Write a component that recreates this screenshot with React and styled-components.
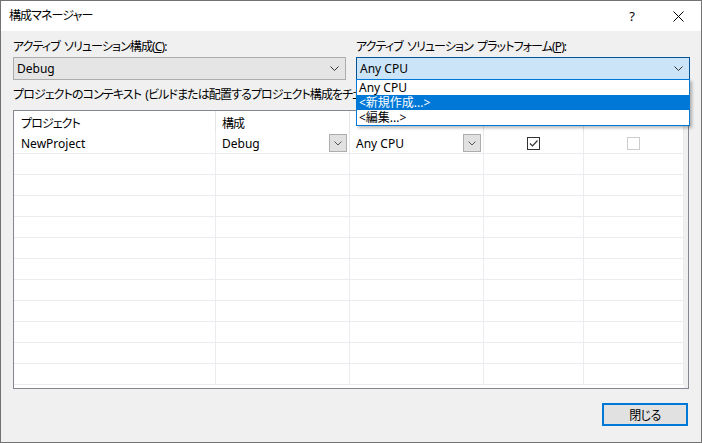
import React from "react";
import styled, { createGlobalStyle } from "styled-components";

const GlobalStyle = createGlobalStyle`
  html, body { margin: 0; padding: 0; background: #fff; }
  body {
    font-family: "Noto Sans", "Noto Sans CJK JP", sans-serif;
    font-size: 12px;
    color: #000;
    font-feature-settings: "palt";
  }
  * { box-sizing: border-box; }
`;

const Window = styled.div`
  width: 702px;
  height: 443px;
  border: 1px solid #727272;
  background: #f0f0f0;
  display: flex;
  flex-direction: column;
`;

const TitleBar = styled.div`
  height: 30px;
  background: #fff;
  display: flex;
  align-items: center;
  padding-left: 8px;
`;

const TitleText = styled.div`
  flex: 1;
  line-height: 16px;
  letter-spacing: -0.9px;
`;

const TitleButton = styled.div`
  width: 46px;
  height: 30px;
  display: flex;
  align-items: center;
  justify-content: center;
  font-size: 13px;
`;

const Body = styled.div`
  flex: 1;
  display: flex;
  flex-direction: column;
  padding: 8px 11px 0 12px;
`;

const TopGrid = styled.div`
  display: grid;
  grid-template-columns: 333px 334px;
  column-gap: 10px;
`;

const Field = styled.div`
  display: flex;
  flex-direction: column;
  gap: 2px;
`;

const Label = styled.div`
  line-height: 16px;
  letter-spacing: -0.9px;
  word-spacing: 2px;
  white-space: nowrap;
  overflow: hidden;
`;

const Combo = styled.div`
  position: relative;
  height: 23px;
  display: flex;
  align-items: center;
  justify-content: space-between;
  padding: 0 3px;
  border: 1px solid ${(p) => (p.$open ? "#005499" : "#acacac")};
  background: ${(p) => (p.$open ? "#cce4f7" : "#e5e5e5")};
`;

const Chevron = styled.svg`
  width: 9px;
  height: 5px;
  margin-right: 3px;
  flex: none;
`;

const DropList = styled.div`
  position: absolute;
  top: 100%;
  left: -1px;
  right: -1px;
  border: 1px solid #0078d7;
  background: #fff;
  box-shadow: 2px 2px 3px rgba(0, 0, 0, 0.28);
  z-index: 5;
`;

const DropItem = styled.div`
  height: 15px;
  line-height: 16px;
  padding-left: 2px;
  background: ${(p) => (p.$active ? "#0078d7" : "transparent")};
  color: ${(p) => (p.$active ? "#fff" : "#000")};
  white-space: nowrap;
`;

const ContextLabel = styled(Label)`
  margin-top: 7px;
  width: 343px;
`;

const TableFrame = styled.div`
  margin-top: 7px;
  margin-right: 1px;
  height: 279px;
  border: 1px solid #828790;
  background: #fff;
  display: flex;
`;

const Grid = styled.div`
  width: 670px;
  display: flex;
  flex-direction: column;
`;

const Strip = styled.div`
  flex: 1;
  background: #f0f0f0;
`;

const Row = styled.div`
  display: grid;
  grid-template-columns: 202px 134px 134px 100px 100px;
  height: ${(p) => (p.$header ? "22px" : "21px")};
  border-bottom: ${(p) => (p.$header ? "none" : "1px solid #ececf0")};
`;

const Cell = styled.div`
  display: flex;
  align-items: center;
  justify-content: ${(p) => (p.$center ? "center" : "space-between")};
  padding-left: ${(p) => (p.$center ? "0" : p.$first ? "7px" : "6px")};
  padding-top: 1px;
  border-right: 1px solid ${(p) => (p.$header ? "#e5e5e5" : "#ececf0")};
  letter-spacing: ${(p) => (p.$header ? "-0.9px" : "0")};
  white-space: nowrap;
  overflow: hidden;
`;

const CellButton = styled.div`
  width: 18px;
  height: 18px;
  margin-right: 2px;
  margin-top: -1px;
  border: 1px solid #adadad;
  background: #e1e1e1;
  display: flex;
  align-items: center;
  justify-content: center;
`;

const Check = styled.div`
  width: 13px;
  height: 13px;
  margin-top: -1px;
  border: 1px solid ${(p) => (p.$disabled ? "#cccccc" : "#333333")};
  background: #fff;
  display: flex;
  align-items: center;
  justify-content: center;
`;

const Footer = styled.div`
  display: flex;
  justify-content: flex-end;
  margin-top: 14px;
`;

const CloseButton = styled.button`
  width: 86px;
  height: 23px;
  margin-right: 2px;
  border: 2px solid #0078d7;
  background: #e1e1e1;
  font: inherit;
  letter-spacing: -0.5px;
  color: #000;
  padding: 0;
`;

const Underlined = styled.span`
  text-decoration: underline;
  text-underline-offset: 1px;
`;

const ChevronIcon = () => (
  <Chevron viewBox="0 0 9 5">
    <polyline points="0.5,0.5 4.5,4.5 8.5,0.5" fill="none" stroke="#333" strokeWidth="1" />
  </Chevron>
);

const SmallChevron = () => (
  <svg width="8" height="5" viewBox="0 0 8 5">
    <polyline points="0.5,0.5 4,4 7.5,0.5" fill="none" stroke="#555" strokeWidth="1" />
  </svg>
);

const EMPTY_ROWS = 11;

export default function App() {
  return (
    <>
      <GlobalStyle />
      <Window>
        <TitleBar>
          <TitleText>構成マネージャー</TitleText>
          <TitleButton>?</TitleButton>
          <TitleButton>
            <svg width="11" height="11" viewBox="0 0 11 11">
              <path d="M0.5 0.5 L10.5 10.5 M10.5 0.5 L0.5 10.5" stroke="#000" strokeWidth="1" />
            </svg>
          </TitleButton>
        </TitleBar>
        <Body>
          <TopGrid>
            <Field>
              <Label>
                アクティブ ソリューション構成(<Underlined>C</Underlined>):
              </Label>
              <Combo>
                <span>Debug</span>
                <ChevronIcon />
              </Combo>
            </Field>
            <Field>
              <Label>
                アクティブ ソリューション プラットフォーム(<Underlined>P</Underlined>):
              </Label>
              <Combo $open>
                <span>Any CPU</span>
                <ChevronIcon />
                <DropList>
                  <DropItem>Any CPU</DropItem>
                  <DropItem $active>&lt;新規作成...&gt;</DropItem>
                  <DropItem>&lt;編集...&gt;</DropItem>
                </DropList>
              </Combo>
            </Field>
          </TopGrid>
          <ContextLabel>
            プロジェクトのコンテキスト (ビルドまたは配置するプロジェクト構成をチェック)
          </ContextLabel>
          <TableFrame>
            <Grid>
              <Row $header>
                <Cell $header $first>プロジェクト</Cell>
                <Cell $header>構成</Cell>
                <Cell $header />
                <Cell $header $center />
                <Cell $header $center />
              </Row>
              <Row>
                <Cell $first>NewProject</Cell>
                <Cell>
                  <span>Debug</span>
                  <CellButton>
                    <SmallChevron />
                  </CellButton>
                </Cell>
                <Cell>
                  <span>Any CPU</span>
                  <CellButton>
                    <SmallChevron />
                  </CellButton>
                </Cell>
                <Cell $center>
                  <Check>
                    <svg width="11" height="11" viewBox="0 0 11 11">
                      <polyline points="2,5.5 4.5,8 9.5,2.5" fill="none" stroke="#333" strokeWidth="1.2" />
                    </svg>
                  </Check>
                </Cell>
                <Cell $center>
                  <Check $disabled />
                </Cell>
              </Row>
              {Array.from({ length: EMPTY_ROWS }).map((_, i) => (
                <Row key={i}>
                  <Cell $first />
                  <Cell />
                  <Cell />
                  <Cell />
                  <Cell />
                </Row>
              ))}
            </Grid>
            <Strip />
          </TableFrame>
          <Footer>
            <CloseButton>閉じる</CloseButton>
          </Footer>
        </Body>
      </Window>
    </>
  );
}
